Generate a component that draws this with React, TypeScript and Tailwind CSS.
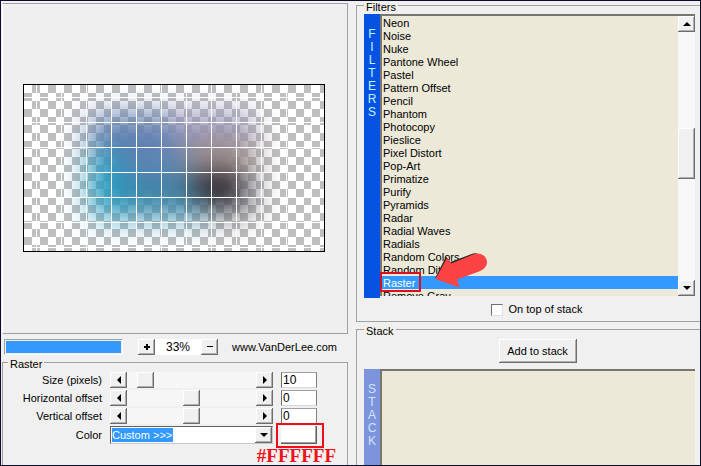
import type { ReactNode } from "react";

const filters = [
  "Neon", "Noise", "Nuke", "Pantone Wheel", "Pastel", "Pattern Offset", "Pencil",
  "Phantom", "Photocopy", "Pieslice", "Pixel Distort", "Pop-Art", "Primatize",
  "Purify", "Pyramids", "Radar", "Radial Waves", "Radials", "Random Colors",
  "Random Dither", "Raster", "Remove Gray",
];

const raised =
  "bg-[#f0f0f0] shadow-[inset_-1px_-1px_0_#6d6d6d,inset_1px_1px_0_#ffffff,inset_-2px_-2px_0_#b0b0b0]";
const sunken =
  "bg-white border border-t-[#a0a0a0] border-l-[#707070] border-r-[#808080] border-b-[#d8d8d8]";

const glyphs = {
  left: "M6 0 L6 8 L2 4 Z",
  right: "M2 0 L2 8 L6 4 Z",
  up: "M0 6 L8 6 L4 2 Z",
  down: "M0 2 L8 2 L4 6 Z",
  plus: "M1 3h2v-2h2v2h2v2h-2v2h-2v-2h-2z",
  minus: "M1 3h6v1h-6z",
};

function GlyphButton({ glyph, label }: { glyph: keyof typeof glyphs; label: string }) {
  return (
    <button type="button" aria-label={label} className={`flex h-4 w-[17px] shrink-0 items-center justify-center ${raised}`}>
      <svg viewBox="0 0 8 8" className="size-2">
        <path d={glyphs[glyph]} fill="#000" />
      </svg>
    </button>
  );
}

function Group({ title, className, legendClass, children }: { title: string; className: string; legendClass: string; children: ReactNode }) {
  return (
    <fieldset className={`min-w-0 border border-[#a0a0a0] ${className}`}>
      <legend className={`h-[9px] bg-[#f0efea] px-0.5 leading-[13px] ${legendClass}`}>{title}</legend>
      {children}
    </fieldset>
  );
}

function OffsetRow({ id, label, value, position }: { id: string; label: string; value: string; position: number }) {
  return (
    <>
      <label htmlFor={id} className="text-right leading-4">{label}</label>
      <div className="flex bg-[#f8f8f8]">
        <GlyphButton glyph="left" label={`Decrease ${label}`} />
        <input
          type="range"
          aria-label={label}
          min={0}
          max={100}
          defaultValue={position}
          className="h-4 min-w-0 flex-1 appearance-none bg-[#f6f6f6] [&::-webkit-slider-thumb]:h-4 [&::-webkit-slider-thumb]:w-[17px] [&::-webkit-slider-thumb]:appearance-none [&::-webkit-slider-thumb]:bg-[#f0f0f0] [&::-webkit-slider-thumb]:shadow-[inset_-1px_-1px_0_#6d6d6d,inset_1px_1px_0_#ffffff,inset_-2px_-2px_0_#b0b0b0]"
        />
        <GlyphButton glyph="right" label={`Increase ${label}`} />
      </div>
      <input id={id} defaultValue={value} className={`h-4 w-full px-px text-xs leading-3 ${sunken}`} />
    </>
  );
}

function SideLabel({ text, className }: { text: string; className: string }) {
  return (
    <div className={`flex w-4 shrink-0 flex-col items-center pt-3.5 text-xs leading-[13px] ${className}`}>
      {text.split("").map((letter, i) => (
        <span key={i}>{letter}</span>
      ))}
    </div>
  );
}

function Preview() {
  return (
    <svg viewBox="0 0 300 166" className="box-content h-[166px] w-[300px] border border-black">
      <defs>
        <pattern id="checks" width="16" height="16" patternUnits="userSpaceOnUse">
          <rect width="16" height="16" fill="#fff" />
          <path d="M8 0h8v8h-8zM0 8h8v8H0z" fill="#bfbfbf" />
        </pattern>
        <pattern id="grid" x="12" y="12" width="25" height="25" patternUnits="userSpaceOnUse">
          <path d="M0 0h25v1H1v24H0z" fill="#fff" />
        </pattern>
        <filter id="soft" x="-50%" y="-50%" width="200%" height="200%" colorInterpolationFilters="sRGB">
          <feGaussianBlur stdDeviation="14" />
        </filter>
        <filter id="edge" x="-50%" y="-50%" width="200%" height="200%" colorInterpolationFilters="sRGB">
          <feGaussianBlur stdDeviation="15" />
        </filter>
        <mask id="fade" maskUnits="userSpaceOnUse" x="0" y="0" width="300" height="166" style={{ maskType: "alpha" }}>
          <rect x="66" y="30" width="164" height="102" rx="12" fill="#fff" filter="url(#edge)" />
        </mask>
      </defs>
      <rect width="300" height="166" fill="url(#checks)" />
      <g mask="url(#fade)">
        <rect width="300" height="166" fill="#6d8bad" />
        <g filter="url(#soft)">
          <rect x="-20" y="-20" width="170" height="85" fill="#5f7cae" />
          <rect x="145" y="-20" width="180" height="80" fill="#9290b8" />
          <rect x="-20" y="65" width="125" height="120" fill="#259ac0" />
          <rect x="98" y="60" width="62" height="34" fill="#5d86b4" />
          <rect x="105" y="94" width="60" height="90" fill="#3b80a2" />
          <rect x="164" y="52" width="150" height="38" fill="#a3928f" />
          <rect x="170" y="87" width="50" height="36" fill="#26242b" />
          <rect x="218" y="84" width="100" height="60" fill="#77757f" />
          <rect x="105" y="122" width="78" height="50" fill="#3590b4" />
          <rect x="182" y="122" width="140" height="60" fill="#707279" />
        </g>
      </g>
      <rect width="300" height="166" fill="url(#grid)" />
    </svg>
  );
}

export default function App() {
  return (
    <main className="grid h-screen grid-cols-[minmax(0,1fr)_344px] gap-2 overflow-hidden border border-[#0b0b2b] bg-[#f0f0f0] pl-px font-['Liberation_Sans',Arial,sans-serif] text-[11px] leading-[13px] text-black">
      <section className="flex min-h-0 flex-col pt-0.5">
        <div className="flex min-h-0 flex-1 items-center justify-center border border-[#a0a0a0] border-l-white bg-[#efefef] pr-0.5 pb-0.5">
          <Preview />
        </div>

        <div className="flex items-center pt-[5px] pb-[3px] pl-0.5">
          <div role="progressbar" aria-label="Rendering" aria-valuenow={100} className="h-4 w-[119px] border border-t-[#a0a0a0] border-r-white border-b-white border-l-[#a0a0a0] p-px">
            <div className="h-full bg-[#3399ff]" />
          </div>
          <div className="ml-[15px] flex">
            <GlyphButton glyph="plus" label="Zoom in" />
            <output className="h-4 w-[46px] bg-white text-center text-xs leading-4">33%</output>
            <GlyphButton glyph="minus" label="Zoom out" />
          </div>
          <a href="#vanderlee" className="ml-3.5 leading-4">www.VanDerLee.com</a>
        </div>

        <Group title="Raster" legendClass="ml-[5px]" className="border-b-0 pr-[30px] pb-[21px]">
          <div className="grid grid-cols-[99px_minmax(0,1fr)_36px] gap-x-2 gap-y-0.5 pt-[5px]">
            <OffsetRow id="size" label="Size (pixels)" value="10" position={9} />
            <OffsetRow id="horizontal" label="Horizontal offset" value="0" position={50} />
            <OffsetRow id="vertical" label="Vertical offset" value="0" position={50} />
            <label htmlFor="color" className="text-right leading-[18px]">Color</label>
            <div className="flex h-[18px] items-center border border-t-[#606060] border-r-[#c8c8c8] border-b-[#c8c8c8] border-l-[#606060] bg-white pl-px">
              <select id="color" className="h-[14px] appearance-none bg-[#3399ff] text-[11px] leading-[14px] text-white">
                <option>Custom &gt;&gt;&gt;</option>
              </select>
              <span className="flex-1" />
              <GlyphButton glyph="down" label="Open color list" />
            </div>
            <div className="relative">
              <button type="button" aria-label="Pick color" className="block h-[18px] w-full bg-white shadow-[inset_-1px_-1px_0_#606060,inset_-2px_-2px_0_#a0a0a0]" />
              <div className="absolute -top-[3px] -right-[7px] -bottom-1 -left-[5px] border-2 border-[#ee1018]" />
              <p className="absolute top-5 -right-[19px] font-['Liberation_Serif','Times_New_Roman',serif] text-[19px] leading-5 font-bold text-[#f01018]">#FFFFFF</p>
            </div>
          </div>
        </Group>
      </section>

      <section className="flex min-h-0 flex-col gap-[3px]">
        <Group title="Filters" legendClass="" className="border-r-0 pr-[5px] pb-[5px] pl-[7px]">
          <div className="relative mt-1 flex h-[284px]">
            <SideLabel text="FILTERS" className="bg-[#0653e3] text-[#c0f4ff]" />
            <div className="mb-0.5 flex min-w-0 flex-1 border-t-2 border-l-2 border-[#78766e]">
              <ul role="listbox" aria-label="Filters" className="min-w-0 flex-1 overflow-hidden bg-[#ece9d8]">
                {filters.map((name) => (
                  <li
                    key={name}
                    role="option"
                    aria-selected={name === "Raster"}
                    className={`h-[13px] pl-px leading-[15px] ${name === "Raster" ? "bg-[#3399ff] text-white" : ""}`}
                  >
                    {name}
                  </li>
                ))}
              </ul>
              <div className="flex w-[17px] flex-col bg-[#f8f8f8]">
                <GlyphButton glyph="up" label="Scroll up" />
                <div className="flex-1 pt-24">
                  <div className={`h-[51px] ${raised}`} />
                </div>
                <GlyphButton glyph="down" label="Scroll down" />
              </div>
            </div>
            <div className="absolute bottom-1.5 left-4 h-5 w-[41px] border-2 border-[#dc101c]" />
            <svg viewBox="434 252 56 38" className="absolute bottom-2 left-[70px] h-[38px] w-14">
              <path d="M435 278.500 L446 256.500 L450.500 262 L473 253.500 L478 253 L452 264 Z" fill="#2a2724" />
              <path d="M435.500 279 L447 258 L451.500 263.500 L473 254.500 C480 251.500 487 256 487 262 C487 267 483 270 479 271.500 L457 279.500 L459.500 287.500 Z" fill="#fc4343" />
            </svg>
          </div>
          <label className="mt-[5px] flex items-center justify-center gap-1.5 pl-3.5">
            <input type="checkbox" className="size-3 appearance-none border border-t-[#707070] border-r-[#e0e0e0] border-b-[#e0e0e0] border-l-[#707070] bg-white" />
            On top of stack
          </label>
        </Group>

        <Group title="Stack" legendClass="" className="flex flex-1 flex-col border-r-0 border-b-0 pr-[5px] pl-[7px]">
          <div className="flex justify-center pt-[5px] pl-4">
            <button type="button" className={`h-6 w-[78px] ${raised}`}>Add to stack</button>
          </div>
          <div className="mt-1.5 flex flex-1">
            <SideLabel text="STACK" className="bg-[#7b94dc] text-[#d4e4fc]" />
            <div role="listbox" aria-label="Stack" className="flex-1 border-t-2 border-l-2 border-[#78766e] bg-[#ece9d8]" />
          </div>
        </Group>
      </section>
    </main>
  );
}
